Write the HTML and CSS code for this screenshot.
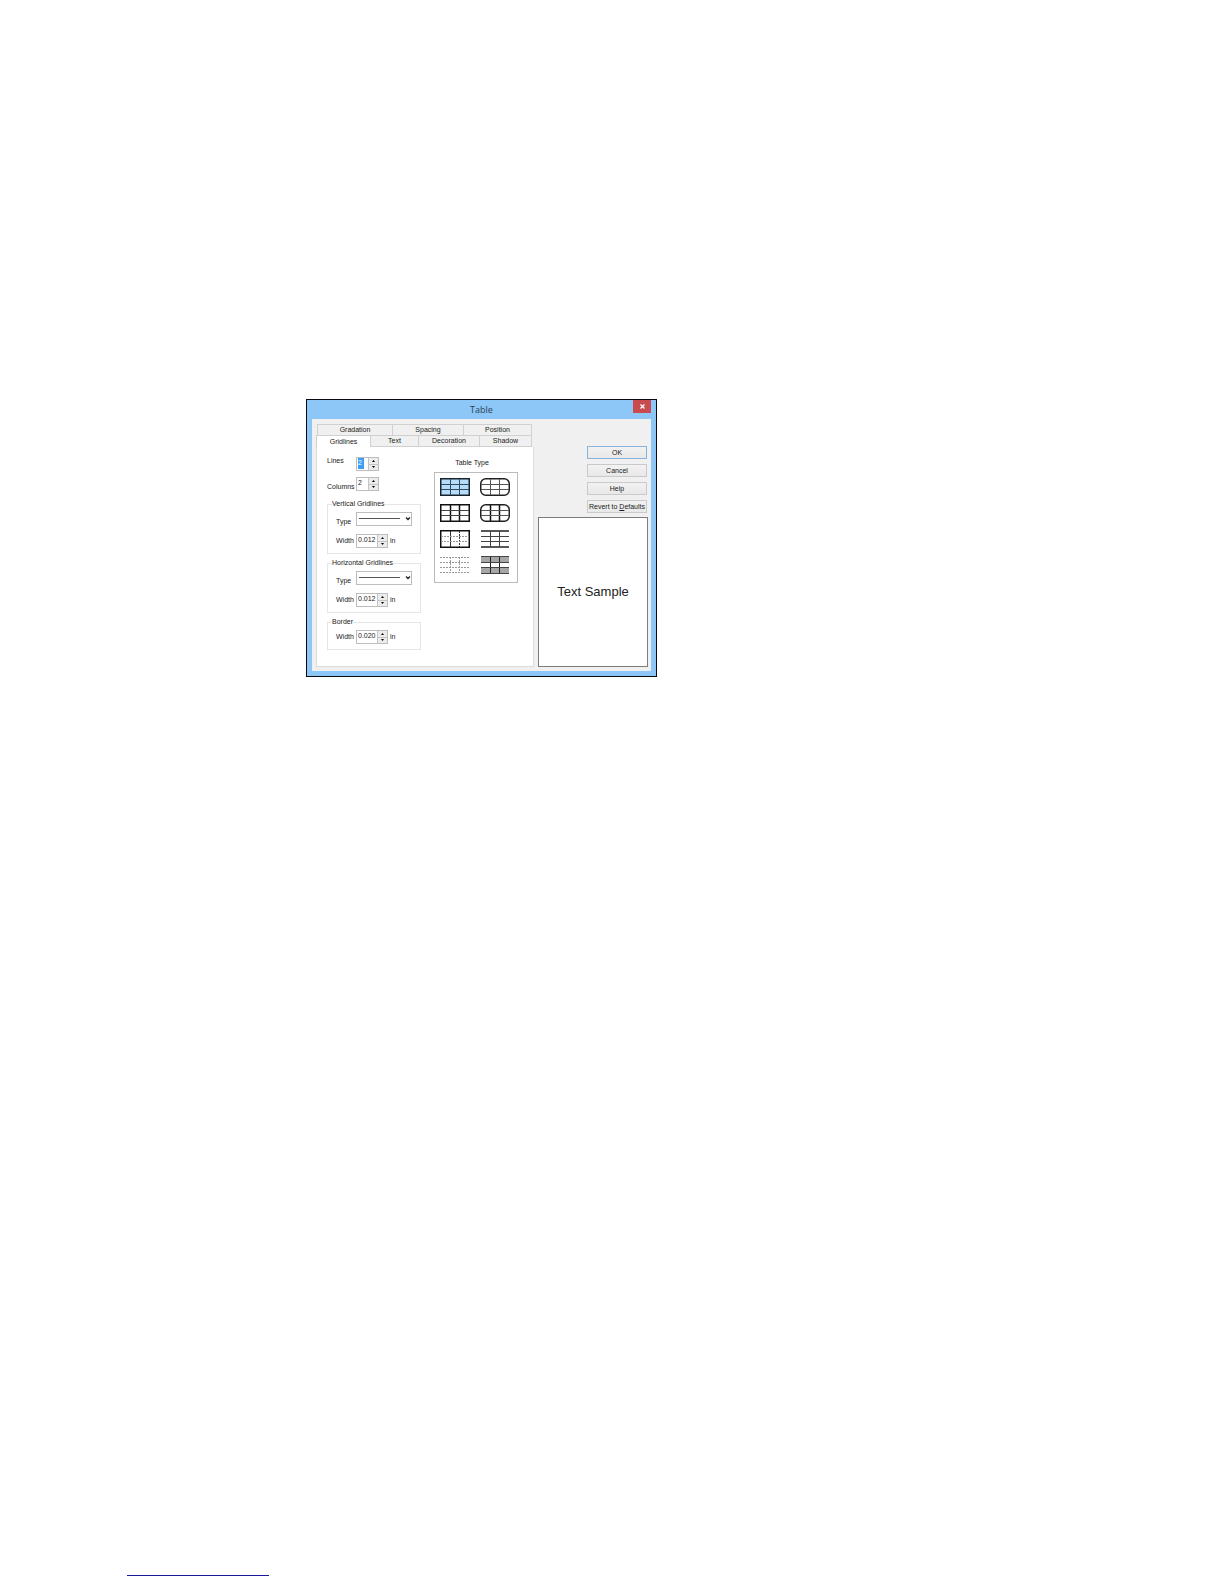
FILE: index.html
```html
<!DOCTYPE html>
<html lang="en">
<head>
<meta charset="utf-8">
<meta name="viewport" content="width=device-width, initial-scale=1">
<title>Table</title>
<link rel="stylesheet" href="styles.css">
</head>
<body>
<main class="page">
  <section class="dialog" role="dialog" aria-labelledby="dialog-title">
    <header class="titlebar">
      <h1 class="title" id="dialog-title">Table</h1>
      <button class="close" type="button" aria-label="Close"><svg width="5" height="5" viewBox="0 0 5 5"><path d="M.5 .5l4 4M4.500 .5l-4 4" stroke="#fff" stroke-width="1.2"/></svg></button>
    </header>
    <form class="client">
      <div class="settings">
        <div class="tabs tabs-back" role="tablist">
          <button class="tab" type="button" role="tab">Gradation</button>
          <button class="tab" type="button" role="tab">Spacing</button>
          <button class="tab" type="button" role="tab">Position</button>
        </div>
        <div class="tabs tabs-front" role="tablist">
          <button class="tab tab-active" type="button" role="tab" aria-selected="true">Gridlines</button>
          <button class="tab" type="button" role="tab">Text</button>
          <button class="tab" type="button" role="tab">Decoration</button>
          <button class="tab" type="button" role="tab">Shadow</button>
        </div>
        <div class="panel" role="tabpanel">
          <div class="options">
            <div class="counts">
              <div class="field count">
                <label for="lines">Lines</label>
                <div class="spin spin-short"><input class="selected" id="lines" type="text" value="2"><span class="arrows"><button type="button" aria-label="More lines"><svg width="3" height="2"><path d="M0 2L1.500 0L3 2z"/></svg></button><button type="button" aria-label="Fewer lines"><svg width="3" height="2"><path d="M0 0L1.500 2L3 0z"/></svg></button></span></div>
              </div>
              <div class="field count count-low">
                <label for="columns">Columns</label>
                <div class="spin spin-short"><input id="columns" type="text" value="2"><span class="arrows"><button type="button" aria-label="More columns"><svg width="3" height="2"><path d="M0 2L1.500 0L3 2z"/></svg></button><button type="button" aria-label="Fewer columns"><svg width="3" height="2"><path d="M0 0L1.500 2L3 0z"/></svg></button></span></div>
              </div>
            </div>
            <fieldset class="group">
              <legend>Vertical Gridlines</legend>
              <div class="field">
                <label class="type-label" for="v-type">Type</label>
                <div class="combo"><select id="v-type"><option aria-label="Solid line"></option></select><svg class="combo-art" width="54" height="12" viewBox="0 0 54 12"><path d="M2 5.500H43" stroke="#555"/><path d="M49 4.500l2 2 2-2" fill="none" stroke="#222" stroke-width="1.300"/></svg></div>
              </div>
              <div class="field">
                <label for="v-width">Width</label>
                <div class="spin"><input id="v-width" type="text" value="0.012"><span class="arrows"><button type="button" aria-label="Wider"><svg width="3" height="2"><path d="M0 2L1.500 0L3 2z"/></svg></button><button type="button" aria-label="Narrower"><svg width="3" height="2"><path d="M0 0L1.500 2L3 0z"/></svg></button></span></div>
                <span class="unit">in</span>
              </div>
            </fieldset>
            <fieldset class="group">
              <legend>Horizontal Gridlines</legend>
              <div class="field">
                <label class="type-label" for="h-type">Type</label>
                <div class="combo"><select id="h-type"><option aria-label="Solid line"></option></select><svg class="combo-art" width="54" height="12" viewBox="0 0 54 12"><path d="M2 5.500H43" stroke="#555"/><path d="M49 4.500l2 2 2-2" fill="none" stroke="#222" stroke-width="1.300"/></svg></div>
              </div>
              <div class="field">
                <label for="h-width">Width</label>
                <div class="spin"><input id="h-width" type="text" value="0.012"><span class="arrows"><button type="button" aria-label="Wider"><svg width="3" height="2"><path d="M0 2L1.500 0L3 2z"/></svg></button><button type="button" aria-label="Narrower"><svg width="3" height="2"><path d="M0 0L1.500 2L3 0z"/></svg></button></span></div>
                <span class="unit">in</span>
              </div>
            </fieldset>
            <fieldset class="group">
              <legend>Border</legend>
              <div class="field">
                <label for="b-width">Width</label>
                <div class="spin"><input id="b-width" type="text" value="0.020"><span class="arrows"><button type="button" aria-label="Wider"><svg width="3" height="2"><path d="M0 2L1.500 0L3 2z"/></svg></button><button type="button" aria-label="Narrower"><svg width="3" height="2"><path d="M0 0L1.500 2L3 0z"/></svg></button></span></div>
                <span class="unit">in</span>
              </div>
            </fieldset>
          </div>
          <div class="types">
            <h2 class="types-title" id="types-title">Table Type</h2>
            <div class="types-box" role="radiogroup" aria-labelledby="types-title">
              <label class="type"><input type="radio" name="type" aria-label="Square" checked><svg viewBox="0 0 30 18"><rect x=".75" y=".75" width="28.500" height="16.500" fill="#b5dcfa" stroke="#16242f" stroke-width="1.500"/><path d="M10.500 1v16M19.500 1v16M1 6.500h28M1 11.500h28" stroke="#34495a"/></svg></label>
              <label class="type"><input type="radio" name="type" aria-label="Rounded"><svg viewBox="0 0 30 18"><rect x=".75" y=".75" width="28.500" height="16.500" rx="5" fill="none" stroke="#222" stroke-width="1.500"/><path d="M10.500 1v16M19.500 1v16M1 6.500h28M1 11.500h28" stroke="#555"/></svg></label>
              <label class="type"><input type="radio" name="type" aria-label="Heavy columns"><svg viewBox="0 0 30 18"><rect x=".75" y=".75" width="28.500" height="16.500" fill="none" stroke="#111" stroke-width="1.500"/><path d="M10.500 1v16M19.500 1v16" stroke="#111" stroke-width="1.500"/><path d="M1 6.500h28M1 11.500h28" stroke="#444"/></svg></label>
              <label class="type"><input type="radio" name="type" aria-label="Rounded heavy columns"><svg viewBox="0 0 30 18"><rect x=".75" y=".75" width="28.500" height="16.500" rx="5" fill="none" stroke="#222" stroke-width="1.500"/><path d="M10.500 1v16M19.500 1v16" stroke="#111" stroke-width="1.500"/><path d="M1 6.500h28M1 11.500h28" stroke="#555"/></svg></label>
              <label class="type"><input type="radio" name="type" aria-label="Dotted inside"><svg viewBox="0 0 30 18"><rect x=".75" y=".75" width="28.500" height="16.500" fill="none" stroke="#111" stroke-width="1.500"/><path d="M10.500 1v16" stroke="#333"/><path d="M19.500 1v16" stroke="#333" stroke-dasharray="2 1"/><path d="M1 6.500h28M1 11.500h28" stroke="#999" stroke-dasharray="2 1"/></svg></label>
              <label class="type"><input type="radio" name="type" aria-label="Open sides"><svg viewBox="0 0 30 18"><path d="M1 1h28M1 17h28" stroke="#222" stroke-width="1.400"/><path d="M10.500 1v16M19.500 1v16M1 6.500h28M1 11.500h28" stroke="#444"/></svg></label>
              <label class="type"><input type="radio" name="type" aria-label="Dotted"><svg viewBox="0 0 30 18"><path d="M0 1.500h30M0 6.500h30M0 11.500h30M0 16.500h30M10.500 1v16M19.500 1v16" stroke="#999" stroke-dasharray="2 1"/></svg></label>
              <label class="type"><input type="radio" name="type" aria-label="Shaded rows"><svg viewBox="0 0 30 18"><path d="M1 0h28v7H1zM1 11h28v7H1z" fill="#a6a6a6"/><path d="M10.500 1v16M19.500 1v16" stroke="#222"/><path d="M1 .5h28M1 6.500h28M1 11.500h28M1 17.500h28" stroke="#444"/></svg></label>
            </div>
          </div>
        </div>
      </div>
      <div class="side">
        <div class="actions">
          <button class="btn btn-default" type="button">OK</button>
          <button class="btn" type="button">Cancel</button>
          <button class="btn" type="button">Help</button>
          <button class="btn" type="button">Revert to <u>D</u>efaults</button>
        </div>
        <div class="preview">Text Sample</div>
      </div>
    </form>
  </section>
  <footer class="footer"><a class="footer-link" href="#" aria-label="Top of page"></a></footer>
</main>
</body>
</html>
```
FILE: styles.css
```css
* { box-sizing: border-box; }

body {
  margin: 0;
  background: #fff;
  color: #222;
  font: 7px/8px "Liberation Sans", Arial, sans-serif;
}

button, input, select { font: inherit; color: inherit; }
button { padding: 0; }
svg { display: block; }

.page {
  display: flex;
  flex-direction: column;
  align-items: flex-start;
  min-height: 100vh;
  padding: 399px 0 8px 25%;
}

.dialog {
  width: 351px;
  max-width: 100%;
  padding: 0 5px 5px;
  border: 1px solid #060a10;
  background: #8cc7f8;
}

.titlebar {
  display: grid;
  grid-template-columns: 18px 1fr 18px;
  height: 19px;
}

.title {
  grid-column: 2;
  margin: 0;
  color: #2b4254;
  font: 400 9px/19px "Open Sans", sans-serif;
  text-align: center;
}

.close {
  display: flex;
  align-items: center;
  justify-content: center;
  height: 13px;
  border: 0;
  background: #c84b50;
}

.client {
  display: flex;
  gap: 4px;
  padding: 5px 3px 4px 4px;
  background: #f0f0f0;
}

.settings {
  display: flex;
  flex: 1;
  flex-direction: column;
}

.tabs {
  display: grid;
  height: 11px;
  margin-right: 2px;
}

.tabs-back { grid-template-columns: 76px 71px 1fr; padding-left: 1px; }
.tabs-front { grid-template-columns: 55px 48px 61px 1fr; height: 12px; }

.tab {
  border: 1px solid #d0d0d0;
  border-width: 1px 1px 0 0;
  background: #f0f0f0;
  line-height: 10px;
}

.tabs-front .tab { border-bottom-width: 1px; }
.tabs-back .tab:first-child { border-left-width: 1px; }

.tabs-front .tab-active {
  border-width: 1px 1px 0;
  background: #fff;
}

.panel {
  display: flex;
  flex: 1;
  gap: 13px;
  padding: 10px 15px 16px 10px;
  border: 1px solid #dcdcdc;
  border-top: 0;
  background: #fff;
}

.options {
  display: flex;
  flex: 1;
  flex-direction: column;
  gap: 5px;
}

.counts {
  display: flex;
  flex-direction: column;
  gap: 6px;
  margin-bottom: 4px;
}

.field {
  display: grid;
  grid-template-columns: 20px auto 1fr;
  align-items: center;
  height: 14px;
}

.count {
  grid-template-columns: 29px auto;
  align-items: start;
  justify-content: start;
}

.count-low { align-items: end; }
.type-label { align-self: end; }

.group {
  display: flex;
  flex-direction: column;
  gap: 8px;
  min-width: 0;
  margin: 0;
  padding: 4px 0 5px 8px;
  border: 1px solid #e6e6e6;
}

.group legend {
  height: 8px;
  margin-left: -4px;
  padding: 0;
}

.spin {
  display: flex;
  width: 32px;
  height: 14px;
  border: 1px solid #bdbdbd;
}

.spin-short { width: 23px; }

.spin input {
  flex: 1;
  min-width: 0;
  padding: 0 0 2px 1px;
  border: 0;
  background: #fff;
}

.spin .selected {
  background: linear-gradient(#3b9df3, #3b9df3) 1px 0 / 6px 11px no-repeat #fff;
  color: #fff;
}

.arrows {
  display: flex;
  flex-direction: column;
  width: 10px;
}

.arrows button {
  display: flex;
  flex: 1;
  align-items: center;
  justify-content: center;
  border: 1px solid #c4c4c4;
  border-width: 0 0 0 1px;
  background: #ececec;
}

.arrows button:last-child { border-top-width: 1px; }

.unit { padding-left: 2px; }

.combo {
  position: relative;
  width: 56px;
  height: 14px;
}

.combo select {
  width: 100%;
  height: 100%;
  border: 1px solid #bdbdbd;
  appearance: none;
  background: #fff;
}

.combo-art {
  position: absolute;
  inset: 1px;
  pointer-events: none;
}

.types { width: 84px; }

.types-title {
  margin: 2px 0 5px;
  padding-right: 8px;
  font: inherit;
  text-align: center;
}

.types-box {
  display: grid;
  grid-template-columns: 30px 30px;
  gap: 8px 10px;
  padding: 5px 5px 8px;
  border: 1px solid #bcbcbc;
}

.type svg { width: 30px; height: 18px; }

.type input {
  position: absolute;
  margin: 0;
  opacity: 0;
}

.side {
  display: flex;
  flex-direction: column;
  gap: 4px;
  width: 110px;
}

.actions {
  display: grid;
  grid-template-columns: 60px;
  gap: 5px;
  justify-content: end;
  padding: 22px 1px 0 0;
}

.btn {
  height: 13px;
  border: 1px solid #cacaca;
  background: linear-gradient(#f2f2f2, #e8e8e8);
  white-space: nowrap;
}

.btn-default { border-color: #86b4dc; }

.preview {
  display: flex;
  flex: 1;
  align-items: center;
  justify-content: center;
  border: 1px solid #7c7c7c;
  background: #fff;
  color: #222;
  font: 13px/16px "Liberation Sans", Arial, sans-serif;
}

.footer {
  align-self: stretch;
  margin: auto 0 0 -179px;
}

.footer-link {
  display: block;
  width: 142px;
  border-bottom: 1px solid #1a1a9c;
}
```
